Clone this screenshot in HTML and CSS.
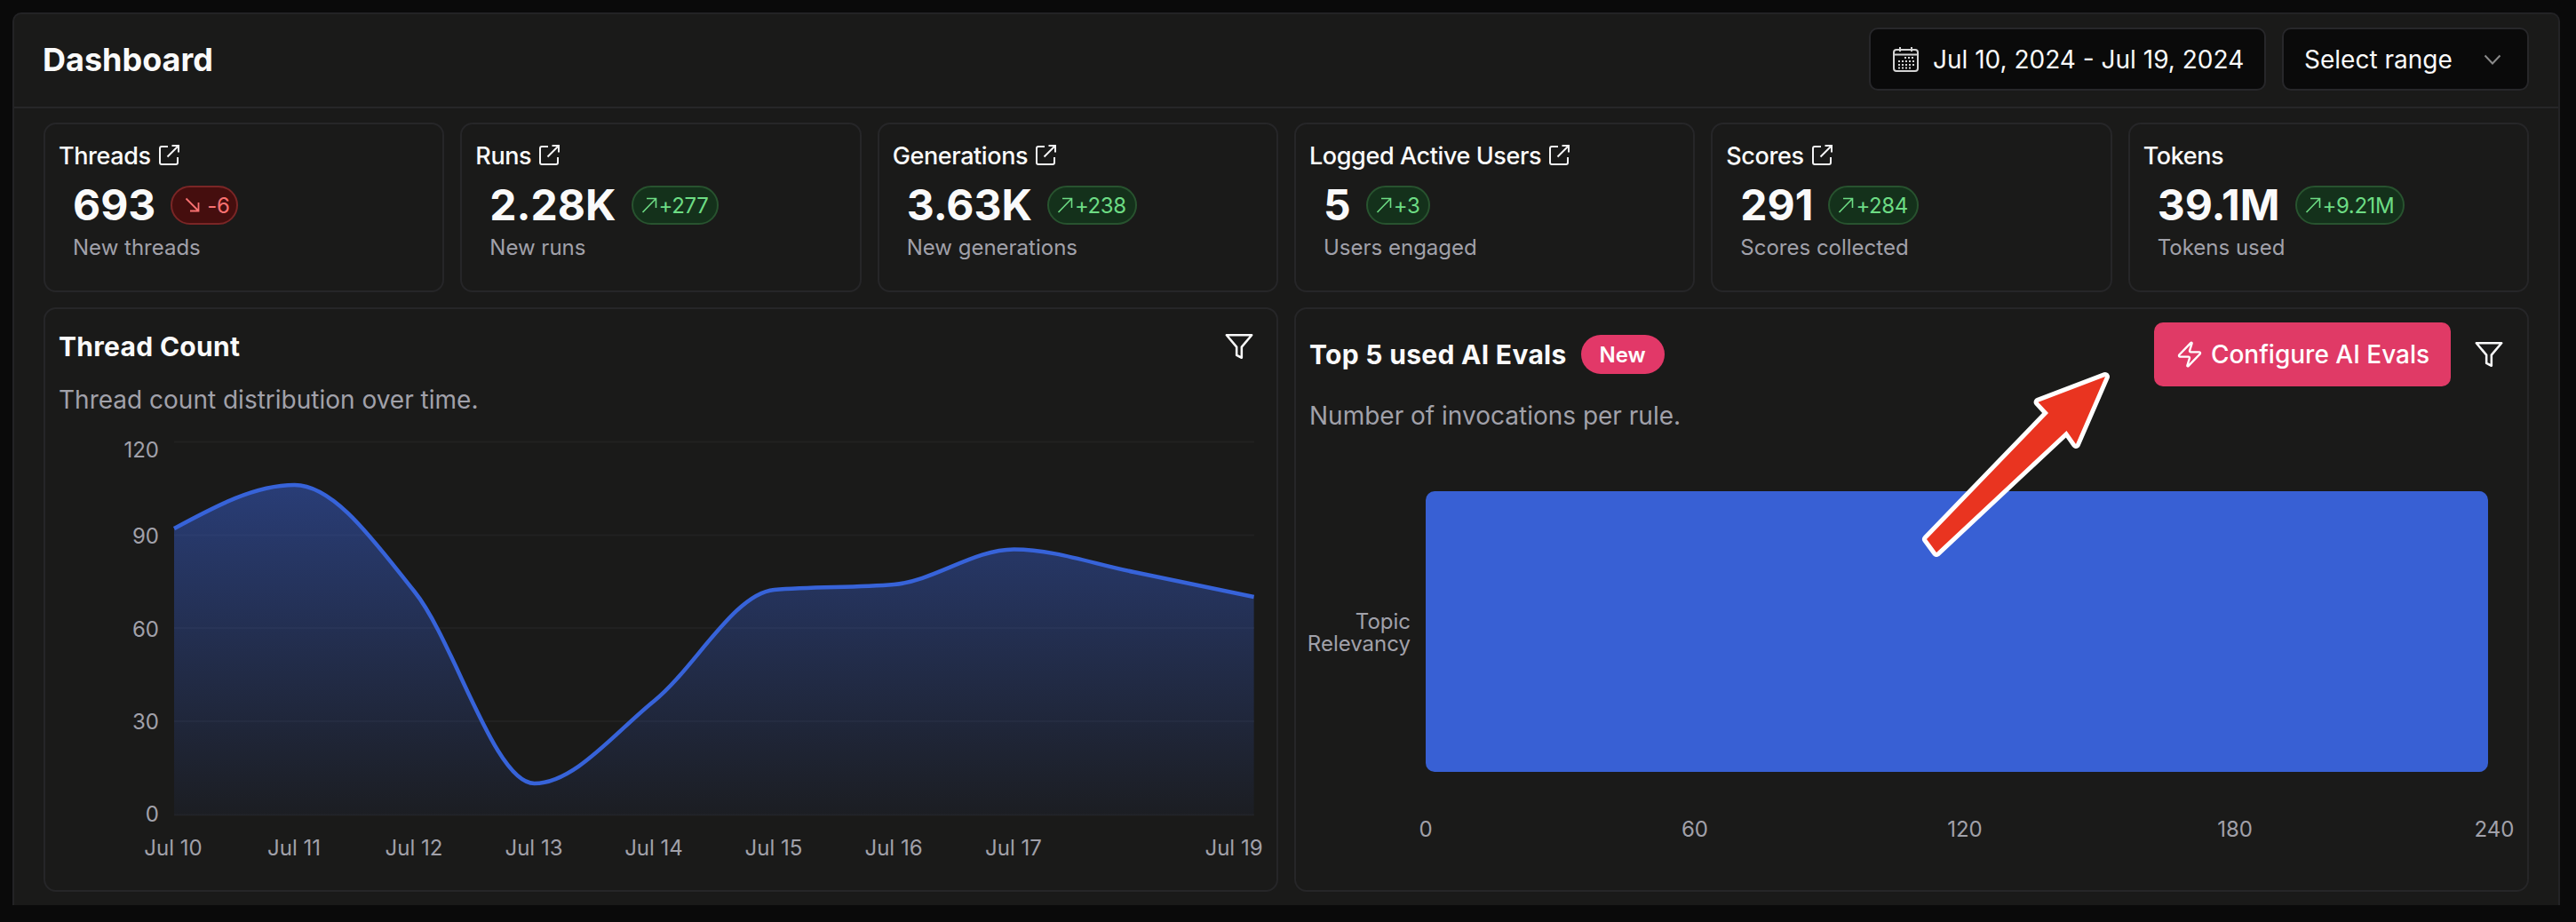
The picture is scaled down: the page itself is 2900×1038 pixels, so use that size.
FILE: index.html
```html
<!DOCTYPE html>
<html lang="en">
<head>
<meta charset="utf-8">
<title>Dashboard</title>
<link rel="stylesheet" href="styles.css">
</head>
<body>
<svg width="0" height="0" class="defs">
  <defs>
    <symbol id="ext" viewBox="0 0 23 23"><path d="M10 2H3a2 2 0 0 0-2 2v16a2 2 0 0 0 2 2h16a2 2 0 0 0 2-2v-6" fill="none" stroke="currentColor" stroke-width="2"/><path d="M9.5 13.5 21.5 1.5M14.5 1h7.5v7.5" fill="none" stroke="currentColor" stroke-width="2"/></symbol>
    <symbol id="up" viewBox="0 0 18 18"><path d="M1.5 17 16.5 1.5M6 1.5h10.5V12" fill="none" stroke="currentColor" stroke-width="1.6"/></symbol>
    <symbol id="down" viewBox="0 0 18 18"><path d="M1.5 1.5 15.5 15.5M15.5 6v9.5H6" fill="none" stroke="currentColor" stroke-width="1.8"/></symbol>
    <symbol id="filter" viewBox="0 0 24 24"><path d="M22 3H2l8 9.46V19l4 2v-8.54L22 3z" fill="none" stroke="currentColor" stroke-width="1.8" stroke-linejoin="round" stroke-linecap="round"/></symbol>
  </defs>
</svg>

<main class="panel">
  <header class="topbar">
    <h1 class="page-title">Dashboard</h1>
    <div class="controls">
      <button class="control date-control">
        <svg class="cal-icon" viewBox="0 0 29 29"><rect x="1" y="4" width="27" height="24" rx="3" fill="none" stroke="currentColor" stroke-width="2"/><path d="M8 1v5M21 1v5M1 9.500h27" fill="none" stroke="currentColor" stroke-width="2"/><path d="M13 13h2M17 13h2M21 13h2M6 17h2M10 17h2M14 17h2M18 17h2M22 17h2M6 21h2M10 21h2M14 21h2M18 21h2M22 21h2M6 24.500h2M10 24.500h2M14 24.500h2M18 24.500h2" fill="none" stroke="currentColor" stroke-width="2"/></svg>
        <span>Jul 10, 2024 - Jul 19, 2024</span>
      </button>
      <button class="control select-control">
        <span>Select range</span>
        <svg class="chevron" viewBox="0 0 20 12"><path d="M1.500 1.500 10 10.500l8.500-9" fill="none" stroke="currentColor" stroke-width="2"/></svg>
      </button>
    </div>
  </header>

  <section class="stats">
    <article class="stat">
      <div class="stat-title">Threads <svg class="ext-icon"><use href="#ext"/></svg></div>
      <div class="stat-row"><span class="stat-value">693</span><span class="delta neg"><svg class="delta-icon"><use href="#down"/></svg>-6</span></div>
      <div class="stat-sub">New threads</div>
    </article>
    <article class="stat">
      <div class="stat-title">Runs <svg class="ext-icon"><use href="#ext"/></svg></div>
      <div class="stat-row"><span class="stat-value">2.28K</span><span class="delta pos"><svg class="delta-icon"><use href="#up"/></svg>+277</span></div>
      <div class="stat-sub">New runs</div>
    </article>
    <article class="stat">
      <div class="stat-title">Generations <svg class="ext-icon"><use href="#ext"/></svg></div>
      <div class="stat-row"><span class="stat-value">3.63K</span><span class="delta pos"><svg class="delta-icon"><use href="#up"/></svg>+238</span></div>
      <div class="stat-sub">New generations</div>
    </article>
    <article class="stat">
      <div class="stat-title">Logged Active Users <svg class="ext-icon"><use href="#ext"/></svg></div>
      <div class="stat-row"><span class="stat-value">5</span><span class="delta pos"><svg class="delta-icon"><use href="#up"/></svg>+3</span></div>
      <div class="stat-sub">Users engaged</div>
    </article>
    <article class="stat">
      <div class="stat-title">Scores <svg class="ext-icon"><use href="#ext"/></svg></div>
      <div class="stat-row"><span class="stat-value">291</span><span class="delta pos"><svg class="delta-icon"><use href="#up"/></svg>+284</span></div>
      <div class="stat-sub">Scores collected</div>
    </article>
    <article class="stat">
      <div class="stat-title">Tokens</div>
      <div class="stat-row"><span class="stat-value">39.1M</span><span class="delta pos"><svg class="delta-icon"><use href="#up"/></svg>+9.21M</span></div>
      <div class="stat-sub">Tokens used</div>
    </article>
  </section>

  <section class="charts">
    <article class="chart-card">
      <div class="chart-head left-head">
        <div class="head-line">
          <h2 class="chart-title">Thread Count</h2>
          <svg class="filter-icon"><use href="#filter"/></svg>
        </div>
        <p class="chart-sub">Thread count distribution over time.</p>
      </div>
      <svg class="plot" viewBox="51 480 1386 522">
        <defs>
          <linearGradient id="area" x1="0" y1="0" x2="0" y2="1">
            <stop offset="0" stop-color="#3860d4" stop-opacity=".5"/>
            <stop offset="1" stop-color="#3860d4" stop-opacity=".05"/>
          </linearGradient>
        </defs>
        <path class="grid" d="M196 497.500H1412M196 602.500H1412M196 707H1412M196 812H1412M196 917.500H1412"/>
        <path class="area-fill" d="M196 595C241.200 570.600 286.400 546 331.600 546C376.600 546 421.600 610 466.600 666C511.600 722 556.600 882 601.600 882C646.600 882 691.600 825.300 736.600 789C781.600 752.700 826.600 668 871.600 664C916.600 660 961.600 662 1006.600 658C1051.600 654 1096.500 618.500 1141.500 618.500C1186.500 618.500 1231.500 635 1276.500 644C1321.500 653 1366.500 662.500 1411.600 672V918H196Z"/>
        <path class="area-line" d="M196 595C241.200 570.600 286.400 546 331.600 546C376.600 546 421.600 610 466.600 666C511.600 722 556.600 882 601.600 882C646.600 882 691.600 825.300 736.600 789C781.600 752.700 826.600 668 871.600 664C916.600 660 961.600 662 1006.600 658C1051.600 654 1096.500 618.500 1141.500 618.500C1186.500 618.500 1231.500 635 1276.500 644C1321.500 653 1366.500 662.500 1411.600 672"/>
        <g class="axis end">
          <text x="179" y="515">120</text><text x="179" y="612">90</text><text x="179" y="717">60</text><text x="179" y="821">30</text><text x="179" y="925">0</text>
        </g>
        <g class="axis mid">
          <text x="195" y="963">Jul 10</text><text x="331" y="963">Jul 11</text><text x="466" y="963">Jul 12</text><text x="601" y="963">Jul 13</text><text x="736" y="963">Jul 14</text><text x="871" y="963">Jul 15</text><text x="1006" y="963">Jul 16</text><text x="1141" y="963">Jul 17</text><text x="1389" y="963">Jul 19</text>
        </g>
      </svg>
    </article>

    <article class="chart-card">
      <div class="chart-head right-head">
        <div class="head-line">
          <div class="title-group">
            <h2 class="chart-title">Top 5 used AI Evals</h2>
            <span class="new-badge">New</span>
          </div>
          <div class="head-actions">
            <button class="cta">
              <svg class="bolt" viewBox="0 0 24 24"><path d="M4 14a1 1 0 0 1-.78-1.63l9.900-10.200a.500.500 0 0 1 .86.460l-1.920 6.020A1 1 0 0 0 13 10h7a1 1 0 0 1 .78 1.630l-9.900 10.200a.500.500 0 0 1-.86-.460l1.920-6.020A1 1 0 0 0 11 14z" fill="none" stroke="currentColor" stroke-width="1.800" stroke-linejoin="round"/></svg>
              <span>Configure AI Evals</span>
            </button>
            <svg class="filter-icon"><use href="#filter"/></svg>
          </div>
        </div>
        <p class="chart-sub right-sub">Number of invocations per rule.</p>
      </div>
      <svg class="plot" viewBox="1459 490 1386 512">
        <rect class="bar" x="1605" y="553" width="1196" height="316" rx="10"/>
        <g class="axis end">
          <text x="1588" y="708">Topic</text><text x="1588" y="733">Relevancy</text>
        </g>
        <g class="axis mid">
          <text x="1605" y="942">0</text><text x="1908" y="942">60</text><text x="2212" y="942">120</text><text x="2516" y="942">180</text><text x="2808" y="942">240</text>
        </g>
      </svg>
    </article>
  </section>
</main>

<svg class="callout" viewBox="2150 410 240 230">
  <path d="M2370 424 2294.600 452.700 2306 465 2169 607 2180 622 2326.500 485 2337 500Z" fill="#e93420" stroke="#fff" stroke-width="10" stroke-linejoin="round" paint-order="stroke"/>
</svg>
</body>
</html>
```

FILE: styles.css
```css
* { box-sizing: border-box; }
html, body { margin: 0; height: 100%; }
body {
  position: relative;
  width: 2900px;
  height: 1038px;
  overflow: hidden;
  background: #0a0a0a;
  padding: 14px 18px 19px 14px;
  font-family: Inter, "Noto Sans", sans-serif;
  color: #fafafa;
}
.defs { position: absolute; }
.panel {
  height: 1005px;
  background: #1a1a19;
  border: 2px solid #232325;
  border-bottom: 0;
  border-radius: 10px 10px 0 0;
  display: flex;
  flex-direction: column;
}
.topbar {
  height: 106px;
  flex: none;
  display: flex;
  align-items: center;
  justify-content: space-between;
  padding: 0 33px 3px;
  border-bottom: 2px solid #262628;
}
.page-title { margin: 0 0 0 -1px; font-size: 36px; font-weight: 700; line-height: 44px; }
.controls { display: flex; gap: 18px; }
.control {
  height: 71px;
  background: #0a0a0a;
  border: 2px solid #27272a;
  border-radius: 10px;
  color: #fafafa;
  font: 400 28px/34px Inter, "Noto Sans", sans-serif;
  display: flex;
  align-items: center;
}
.date-control { width: 447px; padding: 0 0 0 25px; gap: 16px; }
.cal-icon { width: 29px; height: 29px; color: #d4d4d4; }
.select-control { width: 278px; padding: 0 29px 0 23px; justify-content: space-between; }
.chevron { width: 20px; height: 12px; color: #8a8a8a; }

.stats {
  flex: none;
  display: grid;
  grid-template-columns: repeat(6, 1fr);
  gap: 18px;
  margin: 16px 33px 0;
}
.stat {
  height: 191px;
  border: 2px solid #262628;
  border-radius: 14px;
  padding: 18px 15px;
}
.stat-title {
  font-size: 27px;
  font-weight: 500;
  line-height: 36px;
  display: flex;
  align-items: center;
  gap: 9px;
  letter-spacing: -0.4px;
}
.ext-icon { width: 23px; height: 23px; color: #f4f4f5; margin-top: -3px; }
.stat-row { display: flex; align-items: center; gap: 17px; margin: 12px 0 0 16px; height: 50px; }
.stat-value { font-size: 48px; font-weight: 700; line-height: 50px; }
.delta {
  height: 44px;
  padding: 0 10px 0 9px;
  border-radius: 22px;
  border: 2px solid;
  font-size: 24px;
  letter-spacing: -0.4px;
  display: flex;
  align-items: center;
  gap: 2px;
}
.delta.pos { background: #14311b; border-color: #28532f; color: #6ddc84; }
.delta.neg { background: #450e0e; border-color: #7a2626; color: #f87171; padding: 0 8px 0 14px; gap: 7px; }
.delta-icon { width: 18px; height: 18px; }
.stat-sub { margin: 7px 0 0 16px; font-size: 24px; line-height: 32px; color: #a1a1aa; }

.charts {
  flex: 1;
  display: grid;
  grid-template-columns: 1fr 1fr;
  gap: 18px;
  margin: 17px 33px 15px;
  min-height: 0;
}
.chart-card {
  border: 2px solid #262628;
  border-radius: 14px;
  overflow: hidden;
  display: flex;
  flex-direction: column;
}
.chart-head { flex: none; padding: 0 15px; }
.left-head { height: 132px; padding-top: 20px; }
.right-head { height: 142px; padding-top: 15px; }
.head-line { display: flex; align-items: center; justify-content: space-between; height: 44px; }
.right-head .head-line { height: 72px; padding-right: 11px; }
.left-head .head-line { padding-right: 10px; }
.chart-title { margin: 0; font-size: 30px; font-weight: 700; line-height: 44px; letter-spacing: 0.3px; }
.chart-sub { margin: 18px 0 0; font-size: 28px; line-height: 40px; color: #a1a1aa; }
.right-sub { margin-top: 13px; }
.title-group { display: flex; align-items: center; gap: 16px; }
.new-badge {
  height: 44px;
  width: 94px;
  border-radius: 22px;
  background: #e23868;
  color: #fff;
  font-size: 24px;
  font-weight: 600;
  display: flex;
  align-items: center;
  justify-content: center;
}
.head-actions { display: flex; align-items: center; gap: 26px; }
.filter-icon { width: 34px; height: 34px; color: #fafafa; }
.cta {
  width: 334px;
  height: 72px;
  border: 0;
  border-radius: 10px;
  background: #e03a66;
  color: #fff;
  font: 500 28px/34px Inter, "Noto Sans", sans-serif;
  display: flex;
  align-items: center;
  justify-content: center;
  gap: 8px;
}
.bolt { width: 32px; height: 32px; }
.plot { flex: none; display: block; width: 1386px; height: 522px; }
.chart-card:last-child .plot { height: 512px; }
.grid { stroke: #212121; stroke-width: 2; fill: none; }
.area-fill { fill: url(#area); }
.area-line { fill: none; stroke: #3763d9; stroke-width: 4.5; }
.axis text { font-size: 24px; fill: #a1a1aa; font-family: Inter, "Noto Sans", sans-serif; }
.axis.end text { text-anchor: end; }
.axis.mid text { text-anchor: middle; }
.bar { fill: #3860d4; }
.callout { position: absolute; left: 2150px; top: 410px; width: 240px; height: 230px; overflow: visible; }
```
